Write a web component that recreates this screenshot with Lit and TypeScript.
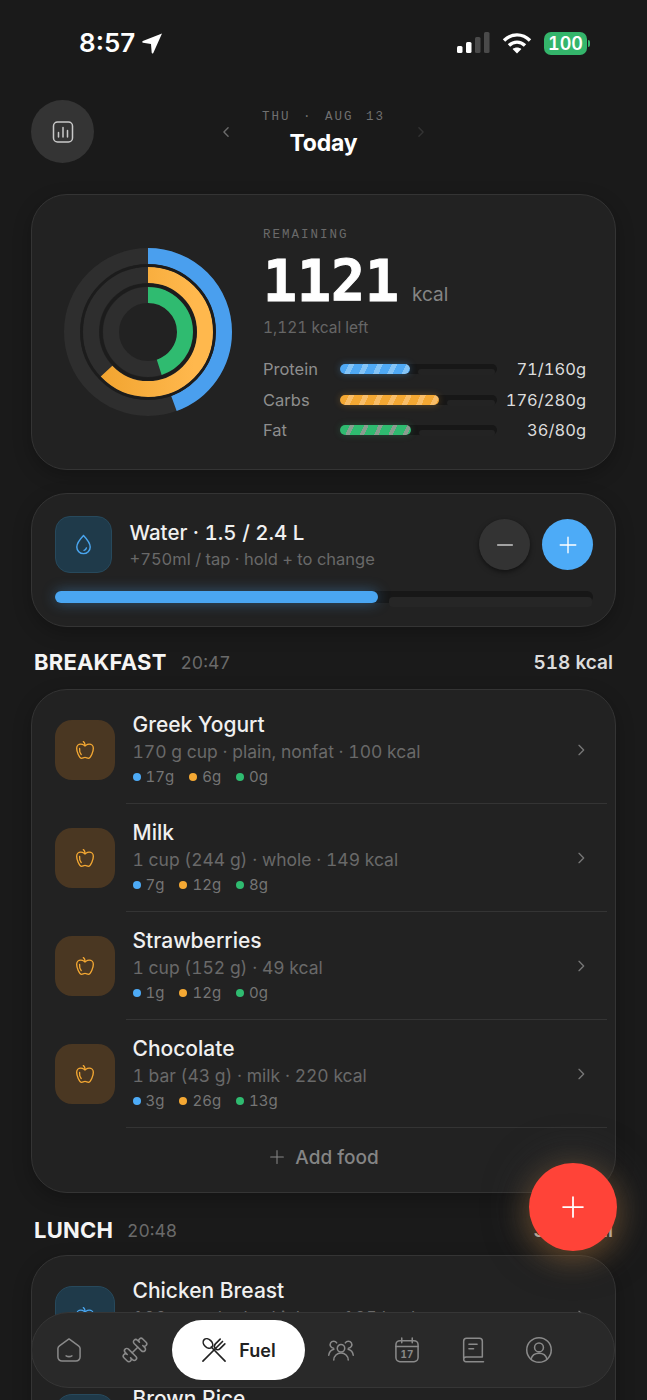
import { LitElement, css, html, svg } from 'lit';
import { customElement } from 'lit/decorators.js';

type Food = { name: string; sub: string; p: number; c: number; f: number };

const BREAKFAST: Food[] = [
  { name: 'Greek Yogurt', sub: '170 g cup · plain, nonfat · 100 kcal', p: 17, c: 6, f: 0 },
  { name: 'Milk', sub: '1 cup (244 g) · whole · 149 kcal', p: 7, c: 12, f: 8 },
  { name: 'Strawberries', sub: '1 cup (152 g) · 49 kcal', p: 1, c: 12, f: 0 },
  { name: 'Chocolate', sub: '1 bar (43 g) · milk · 220 kcal', p: 3, c: 26, f: 13 },
];

const LUNCH: Food[] = [
  { name: 'Chicken Breast', sub: '100 g cooked · skinless · 165 kcal', p: 31, c: 0, f: 4 },
  { name: 'Brown Rice', sub: '1 cup (195 g) · cooked · 216 kcal', p: 5, c: 45, f: 2 },
];

const MACROS = [
  { cls: 'protein', label: 'Protein', val: 71, max: 160 },
  { cls: 'carbs', label: 'Carbs', val: 176, max: 280 },
  { cls: 'fat', label: 'Fat', val: 36, max: 80 },
];

const RINGS = [
  { r: 76, color: '#4a9fee', pct: 71 / 160 },
  { r: 57, color: 'url(#carbs)', pct: 176 / 280 },
  { r: 37, color: '#2fbb70', pct: 36 / 80 },
];

const icon = (body: unknown, size = 24, sw = 1.5) => html`
  <svg width=${size} height=${size} viewBox="0 0 24 24" fill="none" stroke="currentColor" stroke-width=${sw} stroke-linecap="round" stroke-linejoin="round">${body}</svg>
`;

const apple = svg`
  <path d="M12 20.94c1.5 0 2.75 1.06 4 1.06 3 0 6-8 6-12.22A4.91 4.91 0 0 0 17 5c-2.22 0-4 1.44-5 2-1-.56-2.78-2-5-2a4.9 4.9 0 0 0-5 4.78C2 14 5 22 8 22c1.25 0 2.5-1.06 4-1.06Z"/>
  <path d="M10 2c1 .5 2 2 2 5"/>
  <path d="M5.5 10c-.3 2.5.5 5.5 2 7.5"/>
`;
const drop = svg`
  <path d="M12 2.500c3.800 4 7 8 7 12a7 7 0 0 1-14 0c0-4 3.200-8 7-12Z"/>
  <path d="M15 15.500a3.400 3.400 0 0 1-2.400 2.600"/>
`;
const home = svg`
  <path d="M12 2.500 20.200 8.400a3 3 0 0 1 1.300 2.400V18a3.500 3.500 0 0 1-3.500 3.500H6A3.500 3.500 0 0 1 2.500 18v-7.200a3 3 0 0 1 1.300-2.400Z"/>
  <path d="M9.500 17c1.500.8 3.500.8 5 0"/>
`;
const dumbbell = svg`
  <path d="M17.596 12.768a2 2 0 1 0 2.829-2.829l-1.768-1.767a2 2 0 0 0 2.828-2.829l-2.828-2.828a2 2 0 0 0-2.829 2.828l-1.767-1.768a2 2 0 1 0-2.829 2.829z"/>
  <path d="M5.343 21.485a2 2 0 1 0 2.829-2.828l1.767 1.768a2 2 0 1 0 2.829-2.829l-6.364-6.364a2 2 0 1 0-2.829 2.829l1.768 1.767a2 2 0 0 0-2.828 2.829z"/>
  <path d="m9.600 14.400 4.800-4.800"/>
`;
const utensils = svg`
  <ellipse cx="6.800" cy="6.400" rx="3.400" ry="4.600" transform="rotate(-45 6.800 6.400)"/>
  <path d="M9.600 9.400 21.500 21.500"/>
  <path d="M17.300 2.700 13.200 6.800a2.800 2.800 0 0 0 4 4l4.100-4.100"/>
  <path d="M19.300 4.700 15 9 2.500 21.500"/>
`;
const users = svg`
  <circle cx="12" cy="10.500" r="3.200"/>
  <path d="M8.300 5.900a3 3 0 1 0-2.600 4.500"/>
  <path d="M15.700 5.900a3 3 0 1 1 2.600 4.500"/>
  <path d="M5.800 20.500c0-3.400 2.800-6 6.200-6s6.200 2.600 6.200 6"/>
  <path d="M1.500 16.500c.3-2.600 2-4.600 4.400-5.200"/>
  <path d="M22.500 16.500c-.3-2.600-2-4.600-4.400-5.200"/>
`;
const calendar = svg`
  <rect x="2.500" y="4" width="19" height="18" rx="3.500"/>
  <path d="M2.500 9h19M7.500 1.800v4M16.500 1.800v4"/>
  <text x="12" y="19" text-anchor="middle" font-size="8.500" font-weight="700" font-family="Inter, sans-serif" fill="currentColor" stroke="none">17</text>
`;
const book = svg`
  <path d="M4 19V4.500A2.500 2.500 0 0 1 6.500 2h11A2.500 2.500 0 0 1 20 4.500V18H6a2 2 0 0 0-2 2 2 2 0 0 0 2 2h15"/>
  <path d="M8.500 7h7M8.500 11h4"/>
`;
const profile = svg`
  <circle cx="12" cy="12" r="10.500"/>
  <circle cx="12" cy="9.800" r="3.800"/>
  <path d="M5.200 19.800c.8-3 3.500-5 6.800-5s6 2 6.800 5"/>
`;
const plus = svg`<path d="M12 3.500v17M3.500 12h17"/>`;

@customElement('app-root')
export class AppRoot extends LitElement {
  static styles = css`
    :host {
      display: block;
      position: relative;
      width: 647px;
      height: 1400px;
      overflow: hidden;
      background: #1a1a1a;
      font-family: Inter, 'Liberation Sans', sans-serif;
      font-variant-numeric: tabular-nums;
      color: #eee;
    }
    svg {
      display: block;
      flex: none;
    }

    .status {
      height: 100px;
      box-sizing: border-box;
      padding: 29px 57px 0 79px;
      display: flex;
      align-items: flex-start;
      justify-content: space-between;
    }
    .time {
      display: flex;
      align-items: center;
      gap: 6px;
      font-size: 26px;
      font-weight: 600;
      line-height: 28px;
      font-variant-numeric: normal;
      color: #fff;
    }
    .sys {
      display: flex;
      align-items: center;
      height: 28px;
      gap: 12px;
    }
    .battery {
      display: flex;
      align-items: center;
      gap: 1px;
    }
    .battery b {
      display: block;
      width: 43px;
      height: 23px;
      border-radius: 7px;
      background: #34b56b;
      color: #fff;
      font-size: 18px;
      font-weight: 600;
      line-height: 23px;
      text-align: center;
    }
    .battery i {
      display: block;
      width: 2px;
      height: 7px;
      border-radius: 0 2px 2px 0;
      background: #34b56b;
    }

    .top {
      height: 63px;
      padding: 0 31px;
      margin-bottom: 31px;
      display: grid;
      grid-template-columns: 1fr 215px 1fr;
      align-items: center;
    }
    .stats {
      width: 63px;
      height: 63px;
      border-radius: 50%;
      background: #343434;
      color: #c9c9c9;
      display: flex;
      align-items: center;
      justify-content: center;
    }
    .nav-date {
      display: flex;
      align-items: center;
      justify-content: space-between;
      color: #6b6b6b;
    }
    .nav-date .next {
      color: #333;
    }
    .date-col {
      text-align: center;
      padding-top: 3px;
    }
    .date {
      font-family: 'Liberation Mono', monospace;
      font-size: 12.500px;
      line-height: 16px;
      letter-spacing: 2px;
      word-spacing: 3px;
      color: #707070;
      white-space: pre;
    }
    .today {
      font-size: 23px;
      font-weight: 700;
      line-height: 28px;
      margin-top: 4px;
      letter-spacing: -0.2px;
      color: #fff;
    }

    .card {
      margin: 0 31px;
      box-sizing: border-box;
      background: #222;
      border: 1.500px solid #343434;
      border-radius: 36px;
      box-shadow: 0 6px 18px rgba(0, 0, 0, 0.25);
    }

    .summary {
      height: 276px;
      display: flex;
      align-items: flex-start;
      padding: 0 29px 0 32px;
      gap: 31px;
    }
    .rings {
      align-self: center;
    }
    .sum-col {
      flex: 1;
      padding-top: 30px;
    }
    .eyebrow {
      font-family: 'Liberation Mono', monospace;
      font-size: 12.500px;
      line-height: 16px;
      letter-spacing: 2px;
      margin-top: 2px;
      color: #6a6a6a;
    }
    .big {
      display: flex;
      align-items: baseline;
      gap: 13px;
      margin-top: 11px;
    }
    .big b {
      font-family: 'DejaVu Sans Mono', monospace;
      font-size: 56.500px;
      font-weight: 700;
      line-height: 56px;
      -webkit-text-stroke: 1px #fff;
      color: #fff;
    }
    .big span {
      font-size: 19px;
      color: #858585;
    }
    .left {
      font-size: 15.500px;
      line-height: 18px;
      margin-top: 9px;
      color: #666;
    }
    .macros {
      margin-top: 17px;
    }
    .macro {
      display: grid;
      grid-template-columns: 77px 157px 1fr;
      align-items: center;
      height: 30.500px;
      font-size: 16.500px;
    }
    .macro .lbl {
      color: #8e8e8e;
    }
    .macro .val {
      text-align: right;
      color: #dcdcdc;
    }

    .track {
      display: flex;
      align-items: flex-start;
      height: 10px;
      border-radius: 5px;
      background: #171717;
    }
    .fill {
      height: 100%;
      flex: none;
      border-radius: 5px;
    }
    .rest {
      flex: 1;
      height: 6px;
      margin: 5px 2px 0 8px;
      border-radius: 3px;
      background: #232323;
    }
    .fill.protein {
      background: repeating-linear-gradient(115deg, #4fa9f5 0 8px, #84c4f7 8px 13px);
      box-shadow: 0 0 7px rgba(79, 169, 245, 0.35);
    }
    .fill.carbs {
      background: repeating-linear-gradient(115deg, #f4a833 0 8px, #f9be69 8px 13px);
      box-shadow: 0 0 7px rgba(244, 168, 51, 0.3);
    }
    .fill.fat {
      background: repeating-linear-gradient(115deg, #2fbb70 0 9px, #8a9c90 9px 13px);
      box-shadow: 0 0 7px rgba(47, 187, 112, 0.25);
    }

    .water {
      height: 134px;
      margin-top: 23px;
      padding: 22px 22px 0 22.500px;
    }
    .water-top {
      display: flex;
      align-items: center;
    }
    .tile {
      width: 60px;
      height: 60px;
      flex: none;
      border-radius: 17px;
      display: flex;
      align-items: center;
      justify-content: center;
      box-sizing: border-box;
    }
    .tile.orange {
      background: #4a3722;
      color: #f4a833;
    }
    .tile.blue {
      background: #1f3a4a;
      color: #4aa6f0;
      border: 1px solid #27495c;
    }
    .tile.small {
      width: 57px;
      height: 57px;
      border-radius: 15px;
    }
    .water-text {
      flex: 1;
      margin-left: 18px;
    }
    .water-title {
      font-size: 20.500px;
      font-weight: 500;
      line-height: 24px;
      color: #f0f0f0;
    }
    .water-sub {
      font-size: 16.500px;
      line-height: 20px;
      margin-top: 4px;
      color: #696969;
    }
    .round {
      width: 51px;
      height: 51px;
      border-radius: 50%;
      display: flex;
      align-items: center;
      justify-content: center;
      color: #fff;
    }
    .round.minus {
      background: #333;
      color: #c8c8c8;
      margin-right: 12px;
      box-shadow: 0 2px 5px rgba(0, 0, 0, 0.5);
    }
    .round.add {
      background: #4dabf7;
    }
    .water-bar {
      height: 12px;
      margin-top: 18px;
      border-radius: 6px;
    }
    .water-bar .fill {
      background: #4aa6f2;
      border-radius: 6px;
      box-shadow: 0 0 14px rgba(74, 166, 242, 0.4);
    }
    .water-bar .rest {
      height: 10px;
      margin: 6px 1px 0 11px;
      background: #262626;
      border-radius: 4px;
    }

    .head {
      height: 62px;
      box-sizing: border-box;
      padding: 8px 34px 0;
      display: flex;
      align-items: center;
    }
    .head b {
      font-size: 22px;
      font-weight: 700;
      letter-spacing: 0.2px;
      color: #f5f5f5;
    }
    .head span {
      margin-left: 14px;
      font-size: 17.500px;
      color: #6a6a6a;
    }
    .head em {
      margin-left: auto;
      font-style: normal;
      font-size: 19px;
      font-weight: 600;
      color: #dcdcdc;
    }
    .head.next {
      padding-top: 12px;
    }

    .foods {
      padding-top: 6px;
    }
    .row {
      display: flex;
      height: 108px;
      align-items: center;
      padding-left: 22.500px;
    }
    .row-body {
      flex: 1;
      align-self: stretch;
      display: flex;
      align-items: center;
      margin: 0 8px 0 11px;
      padding: 0 18px 0 7px;
      border-bottom: 1px solid #343434;
    }
    .row-text {
      flex: 1;
      padding-top: 1px;
    }
    .name {
      font-size: 21px;
      font-weight: 500;
      line-height: 24px;
      color: #f0f0f0;
    }
    .sub {
      font-size: 17.500px;
      line-height: 20px;
      margin-top: 5px;
      color: #696969;
    }
    .chips {
      display: flex;
      gap: 15px;
      margin-top: 5px;
      font-size: 15px;
      line-height: 20px;
      color: #757575;
    }
    .chip {
      display: flex;
      align-items: center;
      gap: 5px;
    }
    .dot {
      width: 8px;
      height: 8px;
      border-radius: 50%;
    }
    .dot.p {
      background: #4dabf7;
    }
    .dot.c {
      background: #f4a833;
    }
    .dot.f {
      background: #2fbb70;
    }
    .chev {
      color: #777;
    }
    .add-food {
      height: 64px;
      box-sizing: border-box;
      padding-bottom: 6px;
      display: flex;
      align-items: center;
      justify-content: center;
      gap: 9px;
      font-size: 19px;
      font-weight: 500;
      color: #858585;
    }

    .fab {
      position: absolute;
      left: 529px;
      top: 1163px;
      width: 88px;
      height: 88px;
      border-radius: 50%;
      background: #ff4338;
      color: #fff;
      display: flex;
      align-items: center;
      justify-content: center;
      box-shadow: 0 8px 30px rgba(255, 150, 40, 0.28), 0 0 34px 10px rgba(60, 60, 60, 0.5);
    }

    .dock {
      position: absolute;
      left: 31px;
      top: 1312px;
      width: 584px;
      height: 76px;
      box-sizing: border-box;
      border: 1.500px solid #363636;
      border-radius: 38px;
      background: #292929;
      padding-left: 3.500px;
      display: flex;
      align-items: center;
      color: #8a8a8a;
    }
    .tab {
      width: 66px;
      display: flex;
      justify-content: center;
    }
    .pill {
      width: 133px;
      height: 60px;
      margin: 0 3px 0 4px;
      border-radius: 30px;
      background: #fff;
      color: #222;
      display: flex;
      align-items: center;
      justify-content: center;
      gap: 11px;
      font-size: 18px;
      font-weight: 600;
    }
  `;

  private _ring(r: number, color: string, pct: number) {
    const len = 2 * Math.PI * r;
    return svg`
      <circle cx="84" cy="84" r=${r} stroke="#2e2e2e" stroke-width="16" fill="none"/>
      <circle cx="84" cy="84" r=${r} stroke=${color} stroke-width="16" fill="none"
        stroke-dasharray="${len * pct} ${len}" transform="rotate(-90 84 84)"/>
    `;
  }

  private _food(f: Food, tone: string) {
    return html`
      <div class="row">
        <div class="tile ${tone}">${icon(apple, 20, 1.6)}</div>
        <div class="row-body">
          <div class="row-text">
            <div class="name">${f.name}</div>
            <div class="sub">${f.sub}</div>
            <div class="chips">
              <span class="chip"><i class="dot p"></i>${f.p}g</span>
              <span class="chip"><i class="dot c"></i>${f.c}g</span>
              <span class="chip"><i class="dot f"></i>${f.f}g</span>
            </div>
          </div>
          <span class="chev">${icon(svg`<path d="m9 5 7 7-7 7"/>`, 16, 2)}</span>
        </div>
      </div>
    `;
  }

  render() {
    return html`
      <div class="status">
        <div class="time">
          8:57
          <svg width="22" height="24" viewBox="0 0 22 24"><path fill="#fff" d="M21 2.500 12.300 22c-.4.800-1.500.6-1.600-.3L10 13 2 11.800c-.9-.1-1-1.300-.2-1.700Z"/></svg>
        </div>
        <div class="sys">
          <svg width="33" height="24" viewBox="0 0 33 24">
            <rect x="0" y="15" width="5.500" height="7" rx="1.500" fill="#fff"/>
            <rect x="9" y="11" width="5.500" height="11" rx="1.500" fill="#fff"/>
            <rect x="18" y="6" width="5.500" height="16" rx="1.500" fill="#4a4a4a"/>
            <rect x="27" y="1" width="5.500" height="21" rx="1.500" fill="#4a4a4a"/>
          </svg>
          <svg width="30" height="24" viewBox="0 0 30 24" fill="none" stroke="#fff" stroke-width="3.400" stroke-linecap="butt">
            <path d="M2 9.500C9.500 2 20.500 2 28 9.500"/>
            <path d="M7 14.500c4.700-4.500 11.300-4.500 16 0"/>
            <path fill="#fff" stroke="none" d="M15 22.500 10.600 18c2.500-2 6.300-2 8.800 0Z"/>
          </svg>
          <span class="battery"><b>100</b><i></i></span>
        </div>
      </div>

      <div class="top">
        <div class="stats">
          <svg width="24" height="26" viewBox="0 0 24 26" fill="none" stroke="currentColor" stroke-width="1.500" stroke-linecap="round">
            <rect x="2.500" y="3" width="19" height="20" rx="4"/>
            <path d="M7.500 13.500V18M12 8.500V18M16.500 11.500V18"/>
          </svg>
        </div>
        <div class="nav-date">
          ${icon(svg`<path d="m14.500 7-5 5 5 5"/>`, 20, 1.700)}
          <div class="date-col">
            <div class="date">THU · AUG 13</div>
            <div class="today">Today</div>
          </div>
          <span class="next">${icon(svg`<path d="m9.500 7 5 5-5 5"/>`, 20, 1.700)}</span>
        </div>
        <div></div>
      </div>

      <div class="card summary">
        <svg class="rings" width="168" height="168" viewBox="0 0 168 168">
          <defs>
            <linearGradient id="carbs" gradientUnits="userSpaceOnUse" x1="0" y1="40" x2="0" y2="130">
              <stop offset="0" stop-color="#f2a531"/>
              <stop offset="1" stop-color="#ffb84d"/>
            </linearGradient>
          </defs>
          ${RINGS.map(r => this._ring(r.r, r.color, r.pct))}
          <circle cx="84" cy="84" r="66.500" stroke="#1c1c1c" stroke-width="2.500" fill="none"/>
          <circle cx="84" cy="84" r="47" stroke="#1c1c1c" stroke-width="3" fill="none"/>
        </svg>
        <div class="sum-col">
          <div class="eyebrow">REMAINING</div>
          <div class="big"><b>1121</b><span>kcal</span></div>
          <div class="left">1,121 kcal left</div>
          <div class="macros">
            ${MACROS.map(
              m => html`
                <div class="macro">
                  <span class="lbl">${m.label}</span>
                  <div class="track">
                    <div class="fill ${m.cls}" style="width:${(m.val / m.max) * 100}%"></div>
                    <div class="rest"></div>
                  </div>
                  <span class="val">${m.val}/${m.max}g</span>
                </div>
              `
            )}
          </div>
        </div>
      </div>

      <div class="card water">
        <div class="water-top">
          <div class="tile blue small">${icon(drop, 23, 1.500)}</div>
          <div class="water-text">
            <div class="water-title">Water · 1.5 / 2.4 L</div>
            <div class="water-sub">+750ml / tap · hold + to change</div>
          </div>
          <div class="round minus">${icon(svg`<path d="M4 12h16"/>`, 22, 1.500)}</div>
          <div class="round add">${icon(plus, 22, 1.500)}</div>
        </div>
        <div class="track water-bar">
          <div class="fill" style="width:60%"></div>
          <div class="rest"></div>
        </div>
      </div>

      <div class="head"><b>BREAKFAST</b><span>20:47</span><em>518 kcal</em></div>
      <div class="card foods">
        ${BREAKFAST.map(f => this._food(f, 'orange'))}
        <div class="add-food">${icon(plus, 18, 1.400)}Add food</div>
      </div>

      <div class="head next"><b>LUNCH</b><span>20:48</span><em>381 kcal</em></div>
      <div class="card foods">${LUNCH.map(f => this._food(f, 'blue'))}</div>

      <div class="fab">${icon(plus, 28, 1.500)}</div>

      <div class="dock">
        <span class="tab">${icon(home, 28, 1.300)}</span>
        <span class="tab">${icon(dumbbell, 28, 1.300)}</span>
        <div class="pill">${icon(utensils, 28, 1.400)}Fuel</div>
        <span class="tab">${icon(users, 28, 1.300)}</span>
        <span class="tab">${icon(calendar, 28, 1.300)}</span>
        <span class="tab">${icon(book, 28, 1.300)}</span>
        <span class="tab">${icon(profile, 28, 1.300)}</span>
      </div>
    `;
  }
}

declare global {
  interface HTMLElementTagNameMap {
    'app-root': AppRoot;
  }
}
